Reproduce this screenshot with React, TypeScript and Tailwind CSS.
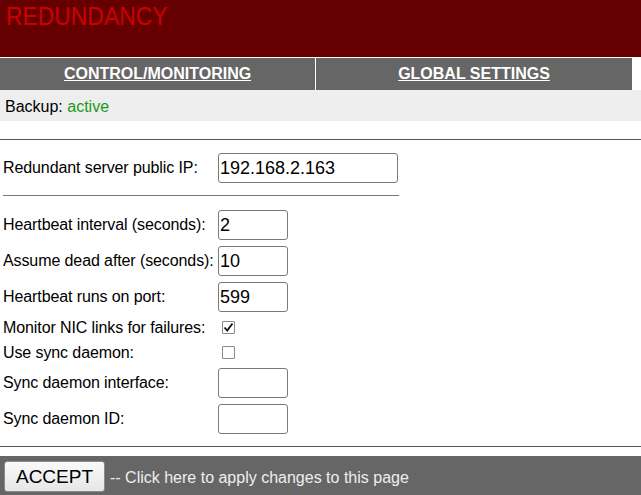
import React from "react";

const Row: React.FC<{ label: string; h?: string; children: React.ReactNode }> = ({ label, h = "h-[36px]", children }) => (
    <div className={`flex items-center ${h}`}>
        <div className="w-[218px] pl-[3px] shrink-0 tracking-[-0.1px]">{label}</div>
        <div className="flex items-center">{children}</div>
    </div>
);

const Field: React.FC<{ value?: string; wide?: boolean }> = ({ value = "", wide }) => (
    <input
        readOnly
        value={value}
        className={`${wide ? "w-[180px]" : "w-[70px]"} h-[30px] border border-[#7a7a7a] rounded-[3px] bg-white px-[1px] text-[18px] text-black outline-none`}
    />
);

const Check: React.FC<{ checked?: boolean }> = ({ checked }) => (
    <span className="ml-[4px] w-[13px] h-[13px] border border-[#8a8a8a] rounded-[1px] bg-white flex items-center justify-center">
        {checked && (
            <svg width="11" height="11" viewBox="0 0 11 11">
                <path d="M1.5 5.5 L4.2 8.5 L9.5 1.5" fill="none" stroke="#111" strokeWidth="1.8" />
            </svg>
        )}
    </span>
);

export default function App() {
    return (
        <div className="w-[641px] h-[495px] overflow-hidden bg-white text-[16px] text-black font-['Liberation_Sans',Arial,sans-serif]">
            <div className="h-[57px] bg-[#660000] pl-[6px]">
                <h1 className="inline-block origin-left scale-x-[0.88] text-[26px] leading-[32px] text-[#cc0000] font-normal">REDUNDANCY</h1>
            </div>
            <div className="mt-[1px] flex w-[632px] h-[32px] gap-[1px]">
                <div className="w-[315px] bg-[#666666] flex items-center justify-center">
                    <a className="text-white font-bold underline">CONTROL/MONITORING</a>
                </div>
                <div className="w-[316px] bg-[#666666] flex items-center justify-center">
                    <a className="text-white font-bold underline">GLOBAL SETTINGS</a>
                </div>
            </div>
            <div className="h-[31px] bg-[#eeeeee] pl-[5px] pt-[2px] flex items-center">
                Backup:&nbsp;<span className="text-[#1a9a1a]">active</span>
            </div>
            <div className="mt-[18px] h-[1px] bg-[#555]" />
            <div className="mt-[10px]">
                <Row label="Redundant server public IP:">
                    <Field value="192.168.2.163" wide />
                </Row>
            </div>
            <div className="mt-[9px] ml-[3px] w-[396px] h-[1px] bg-[#777]" />
            <div className="mt-[11px]">
                <Row label="Heartbeat interval (seconds):"><Field value="2" /></Row>
                <Row label="Assume dead after (seconds):"><Field value="10" /></Row>
                <Row label="Heartbeat runs on port:"><Field value="599" /></Row>
                <Row label="Monitor NIC links for failures:" h="h-[25px]"><Check checked /></Row>
                <Row label="Use sync daemon:" h="h-[25px]"><Check /></Row>
                <Row label="Sync daemon interface:"><Field /></Row>
                <Row label="Sync daemon ID:"><Field /></Row>
            </div>
            <div className="mt-[9px] h-[1px] bg-[#555]" />
            <div className="mt-[9px] h-[45px] bg-[#666666] flex items-start pt-[5px] pl-[4px]">
                <button className="w-[101px] h-[31px] border border-[#8a8a8a] rounded-[3px] bg-gradient-to-b from-[#fafafa] to-[#e6e6e6] text-[19px] text-black leading-none">
                    ACCEPT
                </button>
                <span className="ml-[5px] mt-[5px] text-[#eeeeee]">-- Click here to apply changes to this page</span>
            </div>
        </div>
    );
}
